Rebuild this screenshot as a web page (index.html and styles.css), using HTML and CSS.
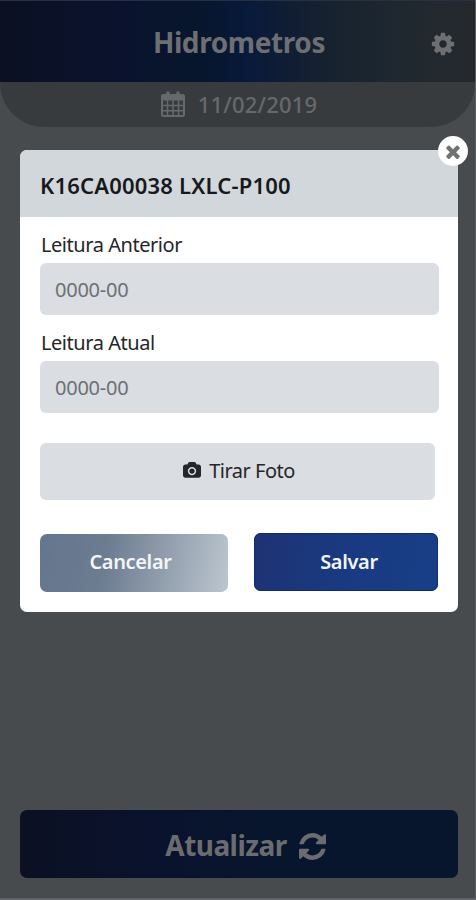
FILE: index.html
```html
<!DOCTYPE html>
<html lang="pt-BR">
<head>
    <meta charset="UTF-8">
    <meta name="viewport" content="width=device-width, initial-scale=1.0">
    <title>Hidrometros</title>
    <link rel="stylesheet" href="styles.css">
</head>
<body>
    <div class="screen">
        <header class="topbar">
            <h1 class="title">Hidrometros</h1>
            <svg class="gear" viewBox="0 0 1792 1792"><path d="M1152 896q0-106-75-181t-181-75-181 75-75 181 75 181 181 75 181-75 75-181zm512-109v222q0 12-8 23t-20 13l-185 28q-19 54-39 91 35 50 107 138 10 12 10 25t-9 23q-27 37-99 108t-94 71q-12 0-26-9l-138-108q-44 23-91 38-16 136-29 186-7 28-36 28h-222q-14 0-24.500-8.500t-11.500-21.500l-28-184q-49-16-90-37l-141 107q-10 9-25 9-14 0-25-11-126-114-165-168-7-10-7-23 0-12 8-23 15-21 51-66.500t54-70.500q-27-50-41-99l-183-27q-13-2-21-12.500t-8-23.500v-222q0-12 8-23t19-13l186-28q14-46 39-92-40-57-107-138-10-12-10-24 0-10 9-23 26-36 98.500-107.500t94.500-71.500q13 0 26 10l138 107q44-23 91-38 16-136 29-186 7-28 36-28h222q14 0 24.500 8.500t11.500 21.500l28 184q49 16 90 37l142-107q9-9 24-9 13 0 25 10 129 119 165 170 7 8 7 22 0 12-8 23-15 21-51 66.500t-54 70.500q26 50 41 98l183 28q13 2 21 12.500t8 23.500z"/></svg>
        </header>

        <div class="date-bar">
            <svg class="calendar" viewBox="0 0 24 26">
                <rect x="1" y="4" width="22" height="21" rx="1.500" fill="none" stroke-width="2"/>
                <path d="M1 5h22v4H1z"/>
                <path d="M6.500 9v16M12 9v16M17.500 9v16M1 14.500h22M1 19.700h22" stroke-width="1.500"/>
                <path class="rings" d="M7 2v4M17 2v4"/>
            </svg>
            <span>11/02/2019</span>
        </div>

        <button class="update-btn">
            <span>Atualizar</span>
            <svg class="refresh" viewBox="128 128 1536 1536"><path d="M1639 1056q0 5-1 7-64 268-268 434.500t-478 166.500q-146 0-282.500-55t-243.500-157l-129 129q-19 19-45 19t-45-19-19-45v-448q0-26 19-45t45-19h448q26 0 45 19t19 45-19 45l-137 137q71 66 161 102t187 36q134 0 250-65t186-179q11-17 53-117 8-23 30-23h192q13 0 22.500 9.500t9.500 22.500zm25-800v448q0 26-19 45t-45 19h-448q-26 0-45-19t-19-45 19-45l138-138q-148-137-349-137-134 0-250 65t-186 179q-11 17-53 117-8 23-30 23h-199q-13 0-22.500-9.500t-9.500-22.500v-7q65-268 270-434.500t480-166.500q146 0 284 55.500t245 156.500l130-129q19-19 45-19t45 19 19 45z"/></svg>
        </button>
    </div>

    <!-- Reading dialog -->
    <div class="modal">
        <button class="close-btn" aria-label="Fechar">
            <svg viewBox="302 238 1188 1316"><path d="M1490 1322q0 40-28 68l-136 136q-28 28-68 28t-68-28l-294-294-294 294q-28 28-68 28t-68-28l-136-136q-28-28-28-68t28-68l294-294-294-294q-28-28-28-68t28-68l136-136q28-28 68-28t68 28l294 294 294-294q28-28 68-28t68 28l136 136q28 28 28 68t-28 68l-294 294 294 294q28 28 28 68z"/></svg>
        </button>
        <div class="modal-header">K16CA00038 LXLC-P100</div>
        <div class="modal-body">
            <label for="anterior" class="label-anterior">Leitura Anterior</label>
            <input type="text" id="anterior" placeholder="0000-00">
            <label for="atual" class="label-atual">Leitura Atual</label>
            <input type="text" id="atual" placeholder="0000-00">
            <button class="photo-btn">
                <svg viewBox="0 0 1920 1792"><path d="M960 672q119 0 203.500 84.500t84.500 203.500-84.500 203.500-203.500 84.500-203.500-84.500-84.500-203.500 84.500-203.500 203.500-84.500zm704-416q106 0 181 75t75 181v896q0 106-75 181t-181 75h-1408q-106 0-181-75t-75-181v-896q0-106 75-181t181-75h224l51-136q19-49 69.500-84.500t103.500-35.500h512q53 0 103.500 35.500t69.500 84.500l51 136h224zm-704 1152q185 0 316.500-131.500t131.500-316.500-131.500-316.500-316.500-131.500-316.500 131.500-131.500 316.500 131.500 316.500 316.500 131.500z"/></svg>
                <span>Tirar Foto</span>
            </button>
            <div class="actions">
                <button class="cancel-btn">Cancelar</button>
                <button class="save-btn">Salvar</button>
            </div>
        </div>
    </div>
</body>
</html>
```
FILE: styles.css
```css
* {
    box-sizing: border-box;
}
body {
    margin: 0;
    position: relative;
    background-color: #474b4d;
    font-family: "Noto Sans", "Open Sans", sans-serif;
}
button {
    border: none;
    padding: 0;
    font-family: inherit;
    cursor: pointer;
}
svg {
    display: block;
    fill: currentColor;
}
.screen {
    height: 900px;
    display: flex;
    flex-direction: column;
    border-right: 1px solid #5a5e62;
    border-bottom: 2px solid #62666a;
}
.topbar {
    height: 82px;
    flex: none;
    display: grid;
    grid-template-columns: 60px 1fr 60px;
    align-items: center;
    border-top: 1px solid #292f40;
    background: linear-gradient(90deg, #0b1022 0%, #0a122d 24%, #07162d 42%, #08193a 52%, #152030 66%, #1f282f 84%, #25292e 100%);
    color: #6d6f73;
}
.title {
    grid-column: 2;
    margin: 0 0 0 3px;
    text-align: center;
    font-size: 28px;
    line-height: 36px;
    font-weight: 700;
    letter-spacing: -0.4px;
}
.gear {
    width: 26px;
    height: 26px;
    margin: 4px 0 0 15px;
}
.date-bar {
    height: 45px;
    flex: none;
    display: flex;
    align-items: center;
    justify-content: center;
    gap: 13px;
    padding: 0 0 1px 3px;
    border-radius: 0 0 44px 44px;
    background-color: #383b3e;
    color: #66696b;
    font-size: 22px;
    font-weight: 500;
    letter-spacing: 0.2px;
}
.calendar {
    width: 24px;
    height: 26px;
    margin-bottom: 1px;
    stroke: currentColor;
}
.calendar .rings {
    stroke-width: 3.500;
    stroke-linecap: round;
}
.update-btn {
    height: 68px;
    margin: auto 17px 20px 20px;
    padding: 1px 0 0 13px;
    display: flex;
    align-items: center;
    justify-content: center;
    gap: 12px;
    border-radius: 7px;
    background: linear-gradient(90deg, #0b1022 0%, #0a122d 30%, #07162d 60%, #07162d 100%);
    color: #6b6c70;
    font-size: 28px;
    font-weight: 700;
    letter-spacing: -0.55px;
}
.refresh {
    width: 27px;
    height: 27px;
    margin-top: 3px;
}
.modal {
    position: absolute;
    top: 150px;
    left: 20px;
    width: 438px;
    height: 462px;
    border-radius: 7px;
    background-color: #fff;
}
.modal-header {
    height: 67px;
    padding: 0 20px;
    border-radius: 7px 7px 0 0;
    background-color: #d2d7db;
    color: #17191c;
    font-size: 22px;
    line-height: 70px;
    font-weight: 600;
    letter-spacing: 0.2px;
}
.close-btn {
    position: absolute;
    top: -14px;
    right: -10px;
    width: 30px;
    height: 30px;
    display: flex;
    align-items: center;
    justify-content: center;
    border-radius: 50%;
    background-color: #fff;
    color: #707274;
}
.close-btn svg {
    width: 14px;
    height: 15px;
}
.modal-body {
    padding: 14px 20px 0;
    display: flex;
    flex-direction: column;
    align-items: flex-start;
}
.modal-body label {
    height: 32px;
    padding-left: 1px;
    color: #252628;
    font-size: 20px;
    line-height: 28px;
    letter-spacing: -0.45px;
}
.modal-body .label-atual {
    margin-top: 14px;
}
.modal-body input {
    width: 399px;
    height: 52px;
    padding: 0 15px;
    border: none;
    border-radius: 6px;
    background-color: #dadde1;
    font-family: inherit;
    font-size: 20px;
    letter-spacing: -0.25px;
}
.modal-body input::placeholder {
    color: #6d7073;
}
.photo-btn {
    width: 395px;
    height: 57px;
    margin-top: 30px;
    padding: 0 0 2px 3px;
    display: flex;
    align-items: center;
    justify-content: center;
    gap: 8px;
    border-radius: 6px;
    background-color: #dadde1;
    color: #242629;
    font-size: 20px;
    letter-spacing: -0.5px;
}
.photo-btn svg {
    width: 18px;
    height: 17px;
}
.actions {
    width: 398px;
    margin-top: 33px;
    display: flex;
    justify-content: space-between;
}
.actions button {
    height: 58px;
    border-radius: 7px;
    color: #f3f5f8;
    font-size: 20px;
    font-weight: 600;
    letter-spacing: -0.35px;
}
.actions .cancel-btn {
    width: 188px;
    margin-top: 1px;
    padding: 0 7px 4px 0;
    background: linear-gradient(100deg, #64768d 0%, #6c7c91 35%, #94a1af 68%, #bcc6cf 100%);
}
.actions .save-btn {
    width: 184px;
    margin-bottom: 1px;
    padding: 0 0 2px 6px;
    background: linear-gradient(100deg, #1e3272 0%, #193a82 50%, #173f87 100%);
    box-shadow: inset 0 0 0 1px #0f2a76;
}
```
